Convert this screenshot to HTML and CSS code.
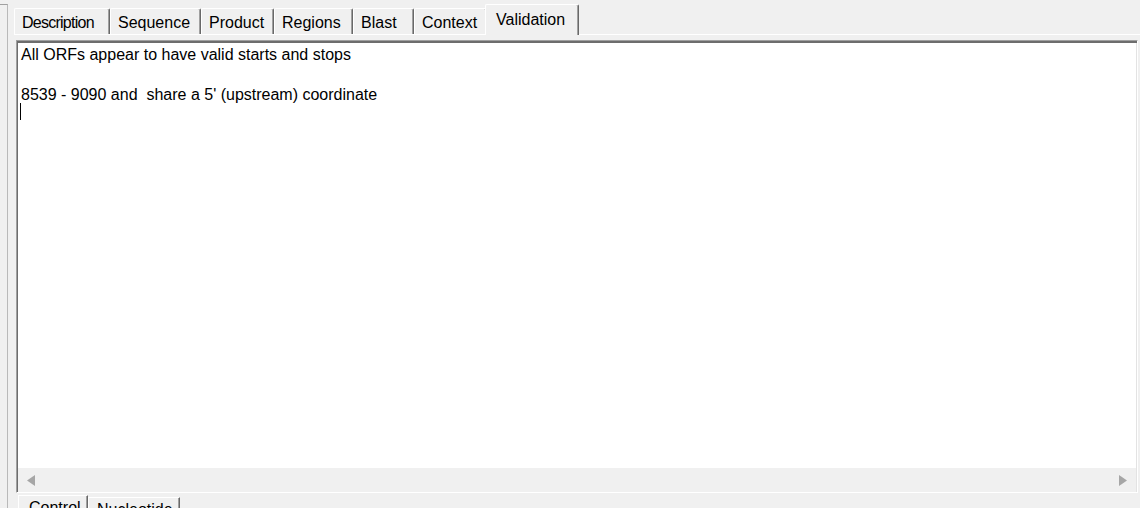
FILE: index.html
```html
<!DOCTYPE html>
<html>
<head>
<meta charset="utf-8">
<link rel="stylesheet" href="styles.css">
</head>
<body>
<div class="root">
  <div class="side"></div>
  <div class="main">
    <div class="tabs">
      <div class="tab tab-tight">Description</div>
      <div class="tab">Sequence</div>
      <div class="tab">Product</div>
      <div class="tab">Regions</div>
      <div class="tab">Blast</div>
      <div class="tab">Context</div>
      <div class="tab tab-active">Validation</div>
    </div>
    <div class="page">
      <div class="edit">
        <div class="edit-text">
          <div class="line">All ORFs appear to have valid starts and stops</div>
          <div class="line">&nbsp;</div>
          <div class="line">8539 - 9090 and&nbsp; share a 5' (upstream) coordinate</div>
          <div class="line"><span class="caret"></span></div>
        </div>
        <div class="hscroll">
          <svg class="arrow" width="8" height="11" viewBox="0 0 8 11"><polygon points="8,0 0,5.5 8,11" fill="#a6a6a6"/></svg>
          <svg class="arrow" width="8" height="11" viewBox="0 0 8 11"><polygon points="0,0 8,5.5 0,11" fill="#a6a6a6"/></svg>
        </div>
      </div>
      <div class="btabs">
        <div class="btab btab-active">Control</div>
        <div class="btab">Nucleotide</div>
      </div>
    </div>
  </div>
</div>
</body>
</html>
```

FILE: styles.css
```css
html, body {
  margin: 0;
  padding: 0;
}
body {
  width: 1140px;
  height: 508px;
  overflow: hidden;
  background: #f0f0f0;
  font-family: "Liberation Sans", Arial, sans-serif;
  font-size: 16px;
  color: #000;
}
.root {
  display: flex;
  height: 508px;
}
.side {
  width: 7px;
  margin-top: 4px;
  border-top: 1px solid #a0a0a0;
  border-right: 1px solid #b9b9b9;
  flex: none;
}
.main {
  flex: 1;
  display: flex;
  flex-direction: column;
  min-width: 0;
}
.tabs {
  display: grid;
  grid-template-columns: 96px 91px 73px 79px 61px 73px 92px;
  align-items: end;
  height: 30px;
  margin-top: 4px;
  padding-left: 6px;
  position: relative;
  z-index: 1;
}
.tab {
  height: 26px;
  box-sizing: border-box;
  padding: 5px 0 0 7px;
  line-height: 18px;
  white-space: nowrap;
  border-top: 1px solid #fff;
  border-left: 1px solid #fff;
  border-right: 1px solid #696969;
  box-shadow: inset -1px 0 0 #a0a0a0;
  border-radius: 2px 2px 0 0;
}
.tab-tight {
  letter-spacing: -0.75px;
}
.tab-active {
  height: 31px;
  margin-left: -2px;
  margin-bottom: -1px;
  padding: 6px 0 0 10px;
  background: #f0f0f0;
}
.page {
  flex: 1;
  display: flex;
  flex-direction: column;
  border-top: 1px solid #fff;
  margin-left: 6px;
  padding: 5px 0 0 2px;
}
.edit {
  width: 1122px;
  height: 453px;
  box-sizing: border-box;
  background: #fff;
  border: 1px solid;
  border-color: #a0a0a0 #fff #fff #a0a0a0;
  box-shadow: inset 1px 2px 0 #6d6d6d, inset -1px -1px 0 #e3e3e3;
  display: flex;
  flex-direction: column;
  flex: none;
}
.edit-text {
  flex: 1;
  padding: 4px 0 0 4px;
  line-height: 20px;
}
.line {
  height: 20px;
  white-space: nowrap;
}
.caret {
  display: inline-block;
  width: 1px;
  height: 17px;
  margin-left: -1px;
  margin-top: -2px;
  vertical-align: top;
  background: #000;
}
.hscroll {
  height: 24px;
  margin: 0 1px 0 1px;
  background: #f0f0f0;
  display: flex;
  align-items: center;
  justify-content: space-between;
  padding: 0 9px 0 9px;
}
.arrow {
  display: block;
}
.btabs {
  display: flex;
  align-items: flex-start;
  margin-top: 2px;
  padding-left: 2px;
}
.btab {
  box-sizing: border-box;
  height: 20px;
  padding: 3px 0 0 8px;
  line-height: 18px;
  border-top: 1px solid #fff;
  border-left: 1px solid #fff;
  border-right: 1px solid #696969;
  box-shadow: inset -1px 0 0 #a0a0a0;
  width: 92px;
  margin-top: 2px;
}
.btab-active {
  width: 70px;
  margin-top: 0;
  padding-left: 10px;
}
```
